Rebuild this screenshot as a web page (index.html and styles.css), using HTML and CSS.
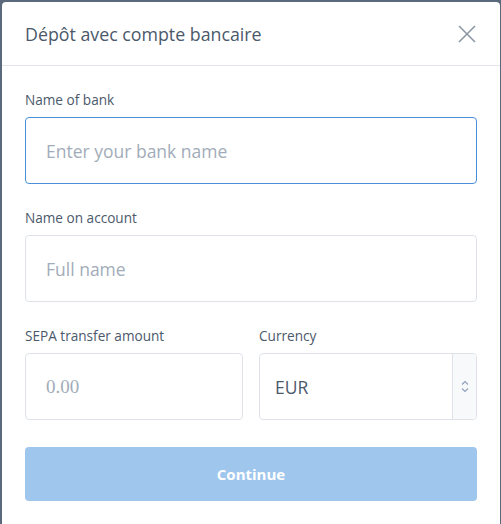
FILE: index.html
```html
<!DOCTYPE html>
<html lang="fr">
<head>
<meta charset="utf-8">
<title>Dépôt avec compte bancaire</title>
<link rel="stylesheet" href="styles.css">
</head>
<body>
<div class="modal">
  <div class="modal-header">
    <h1 class="modal-title">Dépôt avec compte bancaire</h1>
    <button class="close" aria-label="Close">
      <svg width="18" height="18" viewBox="0 0 18 18"><path d="M1 1L17 17M17 1L1 17" stroke="#8c97a4" stroke-width="1.6" fill="none"/></svg>
    </button>
  </div>
  <div class="modal-body">
    <div class="field">
      <label class="label">Name of bank</label>
      <input class="input focused" type="text" placeholder="Enter your bank name">
    </div>
    <div class="field">
      <label class="label">Name on account</label>
      <input class="input" type="text" placeholder="Full name">
    </div>
    <div class="row">
      <div class="field">
        <label class="label">SEPA transfer amount</label>
        <input class="input amount" type="text" placeholder="0.00">
      </div>
      <div class="field">
        <label class="label">Currency</label>
        <div class="select">
          <span class="select-value">EUR</span>
          <span class="stepper">
            <svg width="8" height="13" viewBox="0 0 8 13"><path d="M1 4.5L4 1.5L7 4.5M1 8.5L4 11.5L7 8.5" stroke="#8ea0b8" stroke-width="1.1" fill="none"/></svg>
          </span>
        </div>
      </div>
    </div>
    <button class="continue">Continue</button>
  </div>
</div>
</body>
</html>
```

FILE: styles.css
```css
* { box-sizing: border-box; }
html, body { margin: 0; height: 100%; }
body {
  background: #5a697b;
  font-family: "Open Sans", Lato, sans-serif;
  overflow: hidden;
}
.modal {
  margin: 2px 1px 0 2px;
  background: #fff;
  border-radius: 4px 4px 0 0;
  height: 540px;
}
.modal-header {
  height: 64px;
  border-bottom: 1px solid #e2e5e9;
  display: flex;
  align-items: center;
  justify-content: space-between;
  padding: 0 23px;
}
.modal-title {
  margin: 0;
  font-size: 17.8px;
  font-weight: 400;
  color: #4b596b;
  padding-top: 1px;
}
.close {
  border: 0;
  background: none;
  padding: 0;
  width: 18px;
  height: 18px;
  margin-right: 1px;
  display: flex;
}
.modal-body {
  padding: 25px 23px 0;
}
.field {
  display: flex;
  flex-direction: column;
  margin-bottom: 25px;
  min-width: 0;
}
.label {
  font-size: 13.6px;
  line-height: 18px;
  color: #4b596b;
  margin-bottom: 8px;
}
.input {
  width: 100%;
  min-width: 0;
  height: 67px;
  border: 1px solid #dfe3e9;
  border-radius: 4px;
  padding: 0 20px;
  font-family: "Open Sans", Lato, sans-serif;
  font-size: 17.5px;
  color: #4b596b;
  background: #fff;
  outline: none;
}
.input::placeholder { color: #a2acb8; }
.input.focused { border-color: #4a90d9; }
.input.amount { font-family: "Liberation Serif", serif; font-size: 19px; }
.row {
  display: grid;
  grid-template-columns: minmax(0, 1fr) minmax(0, 1fr);
  gap: 16px;
}
.row .field { margin-bottom: 27px; }
.select {
  height: 67px;
  border: 1px solid #dfe3e9;
  border-radius: 4px;
  display: flex;
  align-items: stretch;
  overflow: hidden;
}
.select-value {
  flex: 1;
  display: flex;
  align-items: center;
  padding-left: 15px;
  font-size: 17.5px;
  color: #4b596b;
}
.stepper {
  width: 24px;
  border-left: 1px solid #dfe3e9;
  background: #f8f9fb;
  display: flex;
  align-items: center;
  justify-content: center;
}
.continue {
  width: 100%;
  height: 54px;
  border: 0;
  border-radius: 4px;
  background: #9fc6ed;
  color: #fff;
  font-family: "Open Sans", Lato, sans-serif;
  font-weight: 700;
  font-size: 15px;
}
```
